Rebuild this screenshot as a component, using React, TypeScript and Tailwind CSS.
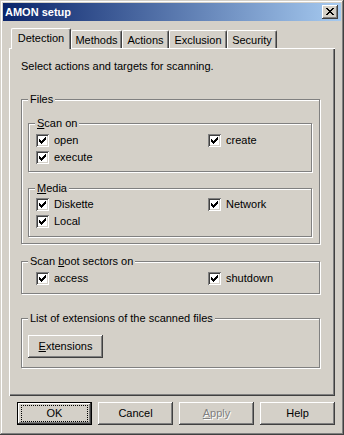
import React from "react";

function CheckMark() {
  const cols: [number, number][] = [
    [3, 5],
    [4, 6],
    [5, 7],
    [6, 6],
    [7, 5],
    [8, 4],
    [9, 3],
  ];
  return (
    <svg width="13" height="13" viewBox="0 0 13 13" shapeRendering="crispEdges" className="block">
      {cols.map(([x, y]) => (
        <rect key={x} x={x} y={y} width="1" height="3" fill="#000" />
      ))}
    </svg>
  );
}

function Checkbox({ children }: { children: React.ReactNode }) {
  return (
    <div className="flex items-center h-[17px]">
      <span className="block w-[13px] h-[13px] shrink-0 bg-white shadow-[inset_1px_1px_0_#808080,inset_-1px_-1px_0_#ffffff,inset_2px_2px_0_#404040,inset_-2px_-2px_0_#d4d0c8]">
        <CheckMark />
      </span>
      <span className="ml-[5px] whitespace-nowrap">{children}</span>
    </div>
  );
}

function Group({
  title,
  className,
  children,
}: {
  title: React.ReactNode;
  className: string;
  children?: React.ReactNode;
}) {
  return (
    <div className={"border border-[#808080] shadow-[inset_1px_1px_0_#ffffff,1px_1px_0_#ffffff] " + className}>
      <div className="-mt-[7px] ml-[6px] px-[2px] w-fit bg-[#d4d0c8] whitespace-nowrap">{title}</div>
      {children}
    </div>
  );
}

function CloseX() {
  const rows: number[][] = [
    [0, 1, 6, 7],
    [1, 2, 5, 6],
    [2, 3, 4, 5],
    [3, 4],
    [2, 3, 4, 5],
    [1, 2, 5, 6],
    [0, 1, 6, 7],
  ];
  return (
    <svg width="8" height="7" viewBox="0 0 8 7" shapeRendering="crispEdges" className="block">
      {rows.map((xs, y) =>
        xs.map((x) => <rect key={y + "-" + x} x={x} y={y} width="1" height="1" fill="#000" />)
      )}
    </svg>
  );
}

const bevel =
  "shadow-[inset_-1px_-1px_0_#404040,inset_1px_1px_0_#ffffff,inset_-2px_-2px_0_#808080]";

function Tab({ label, w, selected }: { label: string; w: string; selected?: boolean }) {
  if (selected) {
    return (
      <div
        className={
          "relative z-10 h-[21px] -mb-[1px] bg-[#d4d0c8] border-t border-l border-white border-r border-r-[#404040] rounded-t-[2px] shadow-[inset_-1px_0_0_#808080] pt-[3px] text-center " +
          w
        }
      >
        {label}
      </div>
    );
  }
  return (
    <div
      className={
        "h-[18px] bg-[#d4d0c8] border-t border-l border-white border-r border-r-[#404040] rounded-t-[2px] shadow-[inset_-1px_0_0_#808080] pt-[3px] text-center " +
        w
      }
    >
      {label}
    </div>
  );
}

export default function App() {
  return (
    <div className="w-[344px] h-[435px] bg-[#d4d0c8] text-black text-[11px] leading-[13px] font-['Liberation_Sans',Arial,sans-serif] flex flex-col pt-[3px] px-[3px] shadow-[inset_-1px_-1px_0_#404040,inset_1px_1px_0_#d4d0c8,inset_-2px_-2px_0_#808080,inset_2px_2px_0_#ffffff]">
      {/* Title bar */}
      <div className="h-[18px] flex items-center justify-between bg-[linear-gradient(to_right,#0a246a,#a6caf0)] pl-[2px] pr-[3px]">
        <span className="text-white font-bold">AMON setup</span>
        <div className={"w-[16px] h-[14px] bg-[#d4d0c8] pl-[4px] pt-[3px] " + bevel}>
          <CloseX />
        </div>
      </div>

      <div className="px-[6px] flex flex-col">
        {/* Tabs */}
        <div className="mt-[7px] flex items-end pl-[2px] h-[20px]">
          <Tab label="Detection" w="w-[60px]" selected />
          <Tab label="Methods" w="w-[51px]" />
          <Tab label="Actions" w="w-[47px]" />
          <Tab label="Exclusion" w="w-[58px]" />
          <Tab label="Security" w="w-[50px]" />
        </div>

        {/* Panel */}
        <div className="h-[348px] pt-[12px] pl-[12px] shadow-[inset_1px_1px_0_#ffffff,inset_-1px_-1px_0_#404040,inset_-2px_-2px_0_#808080]">
          <div>Select actions and targets for scanning.</div>

          <Group title="Files" className="mt-[26px] w-[299px] h-[145px]">
            <Group
              title={
                <>
                  <span className="underline">S</span>can on
                </>
              }
              className="mt-[17px] ml-[6px] w-[284px] h-[49px]"
            >
              <div className="mt-[2px] pl-[7px] grid grid-cols-[172px_auto]">
                <Checkbox>open</Checkbox>
                <Checkbox>create</Checkbox>
                <Checkbox>execute</Checkbox>
              </div>
            </Group>
            <Group
              title={
                <>
                  <span className="underline">M</span>edia
                </>
              }
              className="mt-[16px] ml-[6px] w-[284px] h-[49px]"
            >
              <div className="mt-[1px] pl-[7px] grid grid-cols-[172px_auto]">
                <Checkbox>Diskette</Checkbox>
                <Checkbox>Network</Checkbox>
                <Checkbox>Local</Checkbox>
              </div>
            </Group>
          </Group>

          <Group
            title={
              <>
                Scan <span className="underline">b</span>oot sectors on
              </>
            }
            className="mt-[17px] w-[299px] h-[33px]"
          >
            <div className="mt-[2px] pl-[14px] grid grid-cols-[172px_auto]">
              <Checkbox>access</Checkbox>
              <Checkbox>shutdown</Checkbox>
            </div>
          </Group>

          <Group title="List of extensions of the scanned files" className="mt-[24px] w-[299px] h-[50px]">
            <div
              className={
                "mt-[10px] ml-[6px] w-[75px] h-[23px] bg-[#d4d0c8] flex items-center justify-center " + bevel
              }
            >
              <span>
                <span className="underline">E</span>xtensions
              </span>
            </div>
          </Group>
        </div>

        {/* Bottom buttons */}
        <div className="mt-[6px] flex justify-end gap-[6px]">
          <div className="w-[75px] h-[23px] border border-black">
            <div className={"w-full h-full flex py-[2px] px-[3px] " + bevel}>
              <div className="flex-1 border border-dotted border-black flex items-center justify-center">
                OK
              </div>
            </div>
          </div>
          <div className={"w-[75px] h-[23px] flex items-center justify-center " + bevel}>Cancel</div>
          <div
            className={
              "w-[75px] h-[23px] flex items-center justify-center text-[#808080] [text-shadow:1px_1px_0_#ffffff] " +
              bevel
            }
          >
            <span>
              <span className="underline">A</span>pply
            </span>
          </div>
          <div className={"w-[75px] h-[23px] flex items-center justify-center " + bevel}>Help</div>
        </div>
      </div>
    </div>
  );
}
